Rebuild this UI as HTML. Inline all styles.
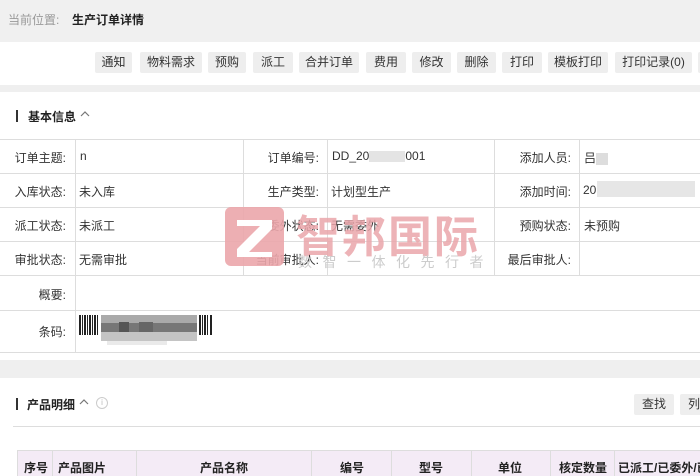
<!DOCTYPE html>
<html><head><meta charset="utf-8"><style>
*{margin:0;padding:0;box-sizing:border-box}
body{width:700px;height:476px;overflow:hidden;background:#fff;font-family:"Liberation Sans","Noto Sans CJK SC",sans-serif;font-size:12px;color:#333;position:relative}
.top{position:absolute;left:0;top:0;width:700px;height:42px;background:#f0f0f0}
.top span{position:absolute;top:11px;font-size:12px}
.btn{position:absolute;top:52px;height:21px;background:#eeeeee;border-radius:2px;font-size:12px;line-height:21px;text-align:center;color:#333}
.band{position:absolute;left:0;width:700px;background:#efefef}
.sec{position:absolute;font-weight:bold;font-size:12px;color:#222}
.bar{position:absolute;width:2px;height:12px;background:#333}
.hl{position:absolute;left:0;width:700px;height:1px;background:#ddd}
.vl{position:absolute;width:1px;background:#ddd}
.lab{position:absolute;text-align:right;font-size:12px;color:#333}
.val{position:absolute;font-size:12px;color:#333}
.blur{position:absolute;background:#ddd}
.th{position:absolute;top:459px;white-space:nowrap;font-weight:bold;color:#222}
</style></head><body>
<div class="top"><span style="left:8px;color:#999">当前位置:</span><span style="left:72px;font-weight:bold;color:#222">生产订单详情</span></div>
<div class="btn" style="left:95px;width:37px">通知</div>
<div class="btn" style="left:140px;width:62px">物料需求</div>
<div class="btn" style="left:208px;width:38px">预购</div>
<div class="btn" style="left:253px;width:40px">派工</div>
<div class="btn" style="left:299px;width:60px">合并订单</div>
<div class="btn" style="left:366px;width:40px">费用</div>
<div class="btn" style="left:412px;width:39px">修改</div>
<div class="btn" style="left:457px;width:39px">删除</div>
<div class="btn" style="left:502px;width:40px">打印</div>
<div class="btn" style="left:548px;width:60px">模板打印</div>
<div class="btn" style="left:615px;width:77px">打印记录(0)</div>
<div class="btn" style="left:698px;width:10px"></div>
<div class="band" style="top:85px;height:7px"></div>
<div class="bar" style="left:16px;top:110px"></div>
<div class="sec" style="left:28px;top:108px">基本信息</div>
<svg style="position:absolute;left:80px;top:111px" width="10" height="7"><path d="M1 5 L5 1 L9 5" fill="none" stroke="#777" stroke-width="1.2"/></svg>

<div class="hl" style="top:139px"></div>
<div class="hl" style="top:173px"></div>
<div class="hl" style="top:207px"></div>
<div class="hl" style="top:241px"></div>
<div class="hl" style="top:275px"></div>
<div class="hl" style="top:310px"></div>
<div class="hl" style="top:352px"></div>
<div class="vl" style="left:75px;top:139px;height:213px"></div>
<div class="vl" style="left:243px;top:139px;height:136px"></div>
<div class="vl" style="left:327px;top:139px;height:136px"></div>
<div class="vl" style="left:494px;top:139px;height:136px"></div>
<div class="vl" style="left:579px;top:139px;height:136px"></div>

<div class="lab" style="left:0;width:66px;top:149px">订单主题:</div><div class="val" style="left:80px;top:149px">n</div>
<div class="lab" style="left:0;width:66px;top:183px">入库状态:</div><div class="val" style="left:79px;top:183px">未入库</div>
<div class="lab" style="left:0;width:66px;top:217px">派工状态:</div><div class="val" style="left:79px;top:217px">未派工</div>
<div class="lab" style="left:0;width:66px;top:251px">审批状态:</div><div class="val" style="left:79px;top:251px">无需审批</div>
<div class="lab" style="left:0;width:66px;top:286px">概要:</div>
<div class="lab" style="left:0;width:66px;top:323px">条码:</div>

<div class="lab" style="left:243px;width:76px;top:149px">订单编号:</div><div class="val" style="left:332px;top:149px">DD_20<span style="display:inline-block;width:36px;height:11px;background:#e4e4e4;vertical-align:middle"></span>001</div>
<div class="lab" style="left:243px;width:76px;top:183px">生产类型:</div><div class="val" style="left:331px;top:183px">计划型生产</div>
<div class="lab" style="left:243px;width:76px;top:217px">委外状态:</div><div class="val" style="left:331px;top:217px">无需委外</div>
<div class="lab" style="left:243px;width:76px;top:251px">当前审批人:</div>

<div class="lab" style="left:494px;width:77px;top:149px">添加人员:</div><div class="val" style="left:584px;top:149px">吕<span style="display:inline-block;width:12px;height:12px;background:#ddd;vertical-align:middle"></span></div>
<div class="lab" style="left:494px;width:77px;top:183px">添加时间:</div><div class="val" style="left:583px;top:183px">20</div><div class="blur" style="left:597px;top:181px;width:98px;height:16px;background:#e6e6e6"></div>
<div class="lab" style="left:494px;width:77px;top:217px">预购状态:</div><div class="val" style="left:584px;top:217px">未预购</div>
<div class="lab" style="left:494px;width:77px;top:251px">最后审批人:</div>

<svg style="position:absolute;left:79px;top:315px" width="136" height="30">
<g fill="#222"><rect x="0" y="0" width="2" height="20"/><rect x="3" y="0" width="1" height="20"/><rect x="5" y="0" width="2" height="20"/><rect x="8" y="0" width="1" height="20"/><rect x="10" y="0" width="2" height="20"/><rect x="13" y="0" width="1" height="20"/><rect x="15" y="0" width="2" height="20"/><rect x="18" y="0" width="1" height="20"/>
<rect x="120" y="0" width="2" height="20"/><rect x="123" y="0" width="1" height="20"/><rect x="125" y="0" width="2" height="20"/><rect x="128" y="0" width="1" height="20"/><rect x="131" y="0" width="2" height="20"/></g>
<rect x="22" y="0" width="96" height="8" fill="#aaa"/><rect x="22" y="8" width="96" height="9" fill="#777"/><rect x="22" y="17" width="96" height="9" fill="#c4c4c4"/><rect x="28" y="26" width="60" height="4" fill="#eaeaea"/>
<rect x="40" y="7" width="10" height="10" fill="#555"/><rect x="60" y="7" width="14" height="10" fill="#666"/>
</svg>

<!-- watermark -->
<div style="position:absolute;left:225px;top:207px;width:59px;height:59px;background:#eba6ab;border-radius:6px;opacity:.9"></div>
<svg style="position:absolute;left:225px;top:207px" width="59" height="59"><path d="M12 13 H47 V22 L24 45 H47 V50 H12 V42 L35 19 H12 Z" fill="#fff"/></svg>
<div style="position:absolute;left:296px;top:201px;font-size:44px;font-weight:bold;color:#eba6ab;letter-spacing:2px;opacity:.85;font-family:'Noto Sans CJK SC',sans-serif">智邦国际</div>
<div style="position:absolute;left:298px;top:252px;font-size:14px;color:#ccc;letter-spacing:10.5px;font-family:'Noto Sans CJK SC',sans-serif">数智一体化先行者</div>

<div class="band" style="top:360px;height:18px"></div>
<div class="bar" style="left:16px;top:398px"></div>
<div class="sec" style="left:27px;top:396px">产品明细</div>
<svg style="position:absolute;left:79px;top:399px" width="10" height="7"><path d="M1 5 L5 1 L9 5" fill="none" stroke="#777" stroke-width="1.2"/></svg>
<div style="position:absolute;left:96px;top:397px;width:12px;height:12px;border:1px solid #ccc;border-radius:50%;color:#bbb;font-size:8px;line-height:10px;text-align:center">i</div>
<div class="btn" style="left:634px;top:394px;width:40px">查找</div>
<div class="btn" style="left:680px;top:394px;width:30px;text-align:left;padding-left:8px">列</div>
<div style="position:absolute;left:13px;top:426px;width:687px;height:1px;background:#ddd"></div>

<div style="position:absolute;left:17px;top:450px;width:700px;height:26px;background:#f4ebf6;border-top:1px solid #ddd;border-left:1px solid #ddd"></div>
<span class="th" style="left:24px">序号</span>
<span class="th" style="left:58px">产品图片</span>
<span class="th" style="left:200px">产品名称</span>
<span class="th" style="left:340px">编号</span>
<span class="th" style="left:419px">型号</span>
<span class="th" style="left:498px">单位</span>
<span class="th" style="left:559px">核定数量</span>
<span class="th" style="left:618px">已派工/已委外/已</span>
<div class="vl" style="left:52px;top:450px;height:26px"></div>
<div class="vl" style="left:136px;top:450px;height:26px"></div>
<div class="vl" style="left:311px;top:450px;height:26px"></div>
<div class="vl" style="left:391px;top:450px;height:26px"></div>
<div class="vl" style="left:471px;top:450px;height:26px"></div>
<div class="vl" style="left:550px;top:450px;height:26px"></div>
<div class="vl" style="left:614px;top:450px;height:26px"></div>
</body></html>
